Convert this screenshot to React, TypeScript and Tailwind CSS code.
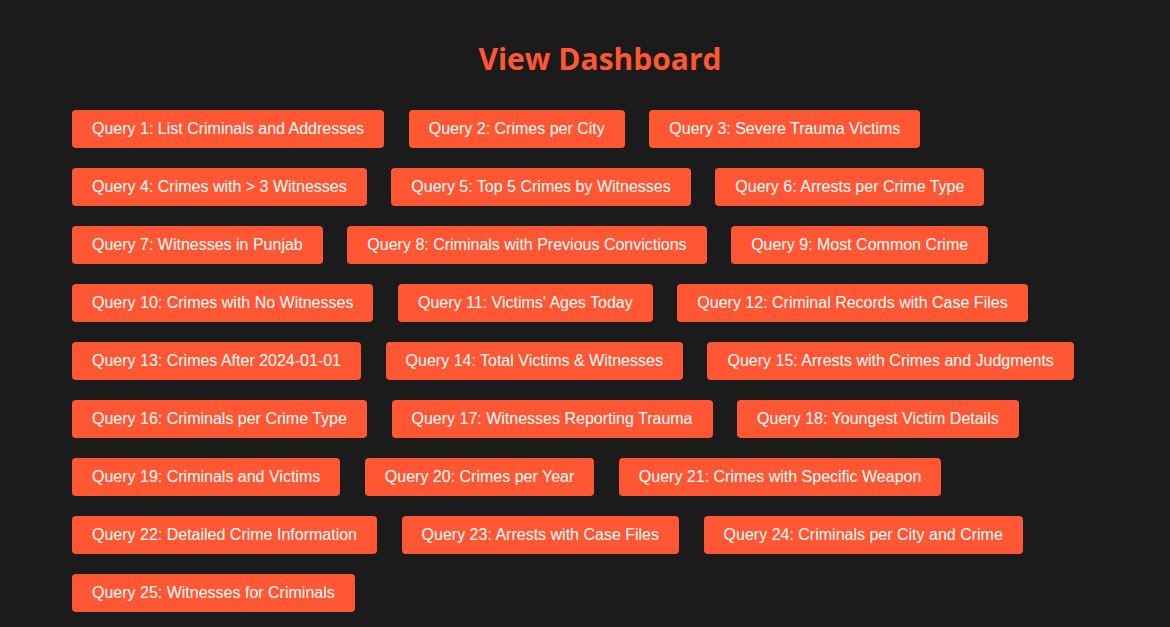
const queries = [
  'Query 1: List Criminals and Addresses',
  'Query 2: Crimes per City',
  'Query 3: Severe Trauma Victims',
  'Query 4: Crimes with > 3 Witnesses',
  'Query 5: Top 5 Crimes by Witnesses',
  'Query 6: Arrests per Crime Type',
  'Query 7: Witnesses in Punjab',
  'Query 8: Criminals with Previous Convictions',
  'Query 9: Most Common Crime',
  'Query 10: Crimes with No Witnesses',
  "Query 11: Victims' Ages Today",
  'Query 12: Criminal Records with Case Files',
  'Query 13: Crimes After 2024-01-01',
  'Query 14: Total Victims & Witnesses',
  'Query 15: Arrests with Crimes and Judgments',
  'Query 16: Criminals per Crime Type',
  'Query 17: Witnesses Reporting Trauma',
  'Query 18: Youngest Victim Details',
  'Query 19: Criminals and Victims',
  'Query 20: Crimes per Year',
  'Query 21: Crimes with Specific Weapon',
  'Query 22: Detailed Crime Information',
  'Query 23: Arrests with Case Files',
  'Query 24: Criminals per City and Crime',
  'Query 25: Witnesses for Criminals',
];

const App = () => {
  return (
    <div className="min-h-screen bg-[#1b1b1b] pt-[40px] pb-10">
      <h1 className="pl-[30px] text-center text-[30px] leading-[38px] font-bold text-[#ff5733] font-['Segoe_UI','Open_Sans',sans-serif]">
        View Dashboard
      </h1>
      <div className="mt-[32px] px-[72px] flex flex-wrap gap-x-[24.6px] gap-y-[20px]">
        {queries.map((q) => (
          <button
            key={q}
            className="bg-[#ff5733] text-white rounded-[4px] px-[20px] py-[10px] text-[16px] leading-[18px] font-['Liberation_Sans',Arial,sans-serif]"
          >
            {q}
          </button>
        ))}
      </div>
    </div>
  );
};

export default App;
